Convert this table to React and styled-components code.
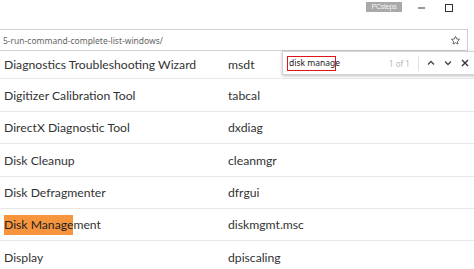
import React from "react";
import styled, { createGlobalStyle } from "styled-components";

const Global = createGlobalStyle`
  html, body { margin: 0; padding: 0; background: #fff; overflow: hidden; }
  body { width: 474px; height: 269px; }
`;

const Page = styled.div`
  position: relative;
  width: 474px;
  height: 269px;
  overflow: hidden;
  background: #fff;
  font-family: "Lato", "Liberation Sans", sans-serif;
`;

const TitleBar = styled.div`
  height: 29px;
  display: flex;
  align-items: flex-start;
  justify-content: flex-end;
  padding-right: 12px;
  box-sizing: border-box;
`;

const Badge = styled.div`
  margin-top: 2px;
  width: 36px;
  height: 10px;
  background: #a9a9a9;
  color: #f4f4f4;
  font-family: "Liberation Sans", sans-serif;
  font-size: 7px;
  line-height: 10px;
  text-align: center;
  letter-spacing: -0.2px;
`;

const WinButton = styled.div`
  width: 27px;
  height: 16px;
  display: flex;
  align-items: center;
  justify-content: center;
  margin-left: ${(p) => p.$ml || 0}px;
`;

const AddressBar = styled.div`
  height: 22px;
  width: 469px;
  margin-left: -1px;
  box-sizing: border-box;
  border: 1px solid #cfcfcf;
  display: flex;
  align-items: center;
  justify-content: space-between;
  padding: 0 6px 0 3px;
`;

const Url = styled.span`
  font-family: "Noto Sans", "Open Sans", sans-serif;
  font-size: 8.5px;
  color: #666;
`;

const Table = styled.div`
  display: flex;
  flex-direction: column;
`;

const Row = styled.div`
  display: grid;
  grid-template-columns: 228px 1fr;
  align-items: center;
  height: ${(p) => p.$h}px;
  border-top: ${(p) => (p.$first ? "none" : "1.5px solid #e8e8e8")};
  box-sizing: border-box;
  padding-left: 4px;
  font-size: 12.2px;
  color: #333;
`;

const Cell = styled.span`
  white-space: nowrap;
  &:last-child { margin-left: -4px; }
`;

const Mark = styled.span`
  background: #f7953f;
  color: #222;
  padding: 2px 0 3px;
`;

const FindBar = styled.div`
  position: absolute;
  left: 282px;
  top: 51px;
  width: 200px;
  height: 24px;
  background: #fff;
  border: 1px solid #d4d4d4;
  box-shadow: 0 1px 3px rgba(0, 0, 0, 0.25);
  display: flex;
  align-items: center;
  box-sizing: border-box;
  padding-left: 4px;
`;

const FindInput = styled.div`
  width: 49px;
  height: 15px;
  border: 1.5px solid #e0141b;
  box-sizing: border-box;
  font-family: "Noto Sans", "Open Sans", sans-serif;
  font-size: 8.5px;
  line-height: 12px;
  color: #222;
  padding-left: 1px;
  white-space: nowrap;
`;

const Count = styled.span`
  margin-left: 53px;
  font-family: "Noto Sans", "Open Sans", sans-serif;
  font-size: 8px;
  color: #b8b8b8;
`;

const Sep = styled.div`
  width: 1px;
  height: 15px;
  background: #e2e2e2;
  margin-left: 8px;
`;

const IconBtn = styled.div`
  width: 17px;
  display: flex;
  justify-content: center;
  margin-left: ${(p) => p.$ml || 0}px;
`;

const rows = [
  ["Diagnostics Troubleshooting Wizard", "msdt"],
  ["Digitizer Calibration Tool", "tabcal"],
  ["DirectX Diagnostic Tool", "dxdiag"],
  ["Disk Cleanup", "cleanmgr"],
  ["Disk Defragmenter", "dfrgui"],
  ["Disk Management", "diskmgmt.msc", "Disk Manage"],
  ["Display", "dpiscaling"],
];

const heights = [27, 33, 32, 33, 32, 32, 33];

export default function App() {
  return (
    <Page>
      <Global />
      <TitleBar>
        <Badge>PCsteps</Badge>
        <WinButton $ml={6}>
          <svg width="7" height="2" viewBox="0 0 7 2">
            <rect x="0" y="0.5" width="7" height="1" fill="#333" />
          </svg>
        </WinButton>
        <WinButton>
          <svg width="8" height="8" viewBox="0 0 8 8">
            <rect x="0.5" y="0.5" width="7" height="7" fill="none" stroke="#333" strokeWidth="1" />
          </svg>
        </WinButton>
      </TitleBar>
      <AddressBar>
        <Url>5-run-command-complete-list-windows/</Url>
        <svg width="11" height="11" viewBox="0 0 24 24">
          <path
            d="M12 3l2.7 5.6 6.1.8-4.5 4.2 1.1 6.1L12 16.8 6.6 19.7l1.1-6.1L3.2 9.4l6.1-.8z"
            fill="none"
            stroke="#555"
            strokeWidth="2"
            strokeLinejoin="round"
          />
        </svg>
      </AddressBar>
      <Table>
        {rows.map(([name, cmd, hl], i) => (
          <Row key={name} $h={heights[i]} $first={i === 0}>
            <Cell>
              {hl ? (
                <>
                  <Mark>{hl}</Mark>
                  {name.slice(hl.length)}
                </>
              ) : (
                name
              )}
            </Cell>
            <Cell>{cmd}</Cell>
          </Row>
        ))}
      </Table>
      <FindBar>
        <FindInput>disk manage</FindInput>
        <Count>1 of 1</Count>
        <Sep />
        <IconBtn $ml={4}>
          <svg width="8" height="6" viewBox="0 0 8 6">
            <path d="M1 4.5L4 1.5L7 4.5" fill="none" stroke="#444" strokeWidth="1.3" />
          </svg>
        </IconBtn>
        <IconBtn>
          <svg width="8" height="6" viewBox="0 0 8 6">
            <path d="M1 1.5L4 4.5L7 1.5" fill="none" stroke="#444" strokeWidth="1.3" />
          </svg>
        </IconBtn>
        <IconBtn>
          <svg width="8" height="8" viewBox="0 0 8 8">
            <path d="M1 1L7 7M7 1L1 7" stroke="#333" strokeWidth="1.4" />
          </svg>
        </IconBtn>
      </FindBar>
    </Page>
  );
}
